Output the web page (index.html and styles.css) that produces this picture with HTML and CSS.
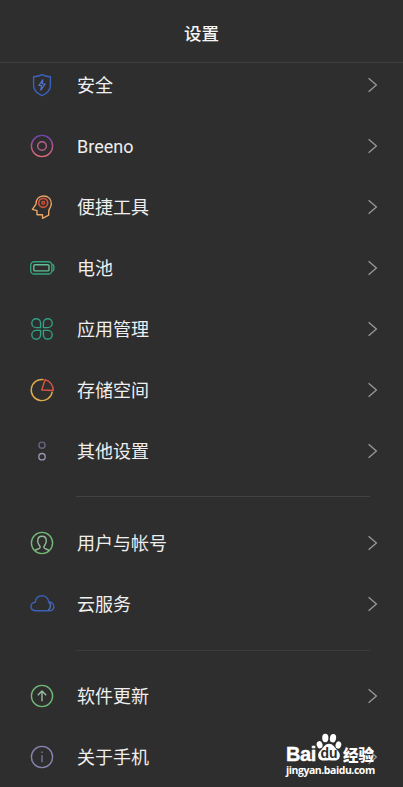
FILE: index.html
```html
<!DOCTYPE html>
<html lang="zh-CN">
<head>
<meta charset="utf-8">
<title>设置</title>
<link rel="stylesheet" href="styles.css">
</head>
<body>
<svg width="0" height="0" class="defs">
  <defs>
    <linearGradient id="ring" x1="0" y1="0" x2="0" y2="1"><stop offset="0" stop-color="#6f45b4"/><stop offset=".5" stop-color="#b65290"/><stop offset="1" stop-color="#e06d78"/></linearGradient>
    <symbol id="chevron" viewBox="0 0 12 18"><path d="M1.6 2.2 9.4 9 1.6 15.8" fill="none" stroke="#999" stroke-width="1.3"/></symbol>
  </defs>
</svg>
<header class="header"><h1>设置</h1></header>
<main class="list">
  <section>
    <div class="row"><svg class="icon" viewBox="0 0 28 28" stroke="#3b61bd"><path d="M14 3.6 C11.5 5.3 8.5 5.6 5.6 5.8 V14.5 C5.6 19.5 9.5 22.6 14 24.6 C18.5 22.6 22.4 19.5 22.4 14.5 V5.8 C19.5 5.6 16.5 5.3 14 3.6Z"/><path d="M14.8 8.8 10.8 14.5 H13.6 L12.8 19.2 17.2 13 H14.2Z" stroke="#5274d2" stroke-width="1.2"/></svg><span>安全</span><svg class="arrow"><use href="#chevron"/></svg></div>
    <div class="row"><svg class="icon" viewBox="0 0 28 28" stroke="url(#ring)"><circle cx="14" cy="14" r="10.6"/><circle cx="14" cy="14" r="4.3" stroke="#bb618f"/></svg><span>Breeno</span><svg class="arrow"><use href="#chevron"/></svg></div>
    <div class="row"><svg class="icon" viewBox="0 0 28 28" stroke="#e9a666"><path d="M14.5 25.3 V21.8 H9 V17.6 L4.4 16.3 8 11.2 C7.8 6.6 10.5 3 15.5 3 C20.5 3 23.3 6.3 23.3 10.7 C23.3 14.3 20.7 16 20.7 18.2 V22.2Z"/><circle cx="15.2" cy="9.8" r="4.5" stroke="#cc5339" stroke-width="1.7"/><circle cx="15.2" cy="9.8" r="1.4" stroke="#cc5339"/></svg><span>便捷工具</span><svg class="arrow"><use href="#chevron"/></svg></div>
    <div class="row"><svg class="icon" viewBox="0 0 28 28" stroke="#31a47d"><rect x="2.7" y="7.7" width="21.2" height="12.3" rx="3.6"/><path d="M24.5 10.2 Q26 11 26 13.8 T24.5 17.5"/><rect x="5.8" y="10.8" width="15.2" height="6.1" rx="1.2" stroke="#65bd94"/></svg><span>电池</span><svg class="arrow"><use href="#chevron"/></svg></div>
    <div class="row"><svg class="icon" viewBox="0 0 28 28" stroke="#31a083"><path d="M12.6 12.6 V8.2 A4.4 4.4 0 1 0 8.2 12.6Z"/><path d="M15.4 12.6 V8.2 A4.4 4.4 0 1 1 19.8 12.6Z"/><path d="M12.6 15.4 V19.8 A4.4 4.4 0 1 1 8.2 15.4Z"/><path d="M15.4 15.4 V19.8 A4.4 4.4 0 1 0 19.8 15.4Z"/></svg><span>应用管理</span><svg class="arrow"><use href="#chevron"/></svg></div>
    <div class="row"><svg class="icon" viewBox="0 0 28 28" stroke="#dfaa4b"><path d="M15.6 3.6 A10.6 10.6 0 1 0 24.3 15.7"/><path d="M17.1 3.7 A10.6 10.6 0 0 1 25.2 14.5 L13.7 14Z" stroke="#d65743"/></svg><span>存储空间</span><svg class="arrow"><use href="#chevron"/></svg></div>
    <div class="row"><svg class="icon" viewBox="0 0 28 28"><circle cx="14" cy="8.2" r="3.1" stroke="#69647f"/><circle cx="14" cy="19.7" r="3.2" stroke="#9292b3"/></svg><span>其他设置</span><svg class="arrow"><use href="#chevron"/></svg></div>
  </section>
  <section>
    <div class="row"><svg class="icon" viewBox="0 0 28 28" stroke="#71b875"><circle cx="14" cy="14" r="10.6"/><path d="M7 21.5 C8 20 12 20.3 12.2 18.2 C12.3 17 9.7 15.3 9.7 12 C9.7 9 11.5 7.3 14 7.3 S18.3 9 18.3 12 C18.3 15.3 15.7 17 15.8 18.2 C16 20.3 20 20 21 21.5" stroke="#94ba98"/></svg><span>用户与帐号</span><svg class="arrow"><use href="#chevron"/></svg></div>
    <div class="row"><svg class="icon" viewBox="0 0 28 28" stroke="#3b60b8"><path d="M8 20.8 C4.8 20.8 3 18.8 3 16.5 C3 14 5 12.3 7.2 12.3 C7.8 8.3 10.5 5.8 14 5.8 C18 5.8 20.4 8.8 20.8 12 C23.7 12 25.8 13.9 25.8 16.4 C25.8 19 23.8 20.8 21 20.8Z"/><path d="M20.8 12 C23.3 14.3 23 18 20 20.5" stroke="#506cb4"/></svg><span>云服务</span><svg class="arrow"><use href="#chevron"/></svg></div>
  </section>
  <section>
    <div class="row"><svg class="icon" viewBox="0 0 28 28" stroke="#70b776"><circle cx="14" cy="14" r="10.6"/><path d="M14 19.2 V9.2 M9.8 13.2 14 9 18.2 13.2" stroke="#9bbba3"/></svg><span>软件更新</span><svg class="arrow"><use href="#chevron"/></svg></div>
    <div class="row"><svg class="icon" viewBox="0 0 28 28" stroke="#8884b2"><circle cx="14" cy="14" r="10.6"/><path d="M14 12.2 V19.2 M14 8.6 V10.1" stroke="#77759a"/></svg><span>关于手机</span><svg class="arrow"><use href="#chevron"/></svg></div>
  </section>
</main>
<aside class="watermark">
  <div class="brand"><b class="bai">Bai</b>
    <span class="paw"><svg viewBox="0 0 26 28"><g fill="#fff"><ellipse cx="3.6" cy="11.8" rx="2.9" ry="3.7" transform="rotate(-15 3.6 11.8)"/><ellipse cx="9.3" cy="5" rx="3.1" ry="4.2"/><ellipse cx="17" cy="5.2" rx="3.1" ry="4.2" transform="rotate(10 17 5.2)"/><ellipse cx="22.4" cy="12" rx="2.8" ry="3.7" transform="rotate(15 22.4 12)"/><path d="M13 10.8 C17 10.8 18.2 14 20.3 16.2 C23 18.7 24.3 20.3 23.8 23.5 C23 28 18.5 27.8 13 27.3 C7.5 27.8 3 28 2.2 23.5 C1.7 20.3 3 18.7 5.7 16.2 C7.8 14 9 10.8 13 10.8Z"/></g></svg><b>du</b></span>
    <b class="exp">经验</b></div>
  <div class="url">jingyan.baidu.com</div>
</aside>
</body>
</html>
```
FILE: styles.css
```css
* { box-sizing: border-box; }
body {
  margin: 0;
  height: 787px;
  overflow: hidden;
  position: relative;
  background: #2e2e2e;
  color: #efefef;
  font-family: Roboto, "Noto Sans CJK SC", sans-serif;
}
.defs { position: absolute; }
.header {
  height: 63px;
  padding-top: 6px;
  display: flex;
  align-items: center;
  justify-content: center;
  border-bottom: 1px solid #3e3e3e;
}
h1 { margin: 0; font-size: 17.5px; font-weight: 500; line-height: 26px; color: #f5f5f5; }
.list { margin-top: -8px; }
.row {
  height: 61px;
  padding: 0 24px 0 28px;
  display: flex;
  align-items: center;
}
.row span { flex: 1; margin-left: 21px; font-size: 18px; line-height: 26px; }
.icon, .arrow { margin-bottom: 1px; }
.icon { width: 28px; height: 28px; fill: none; stroke-width: 1.4; stroke-linejoin: round; }
.arrow { width: 12px; height: 18px; }
section + section::before {
  content: "";
  display: block;
  height: 1px;
  margin: 14px 33px 16px 76px;
  background: #424242;
}
section:last-child::before { margin-top: 15px; margin-bottom: 15px; background: #3b3b3b; }
.watermark {
  position: absolute;
  left: 286px;
  top: 732px;
  width: 92px;
  color: #fff;
}
.brand { display: flex; align-items: flex-end; height: 30px; }
.bai { font: bold 20px/22px "Liberation Sans", sans-serif; width: 30px; margin-bottom: -3px; letter-spacing: -.4px; -webkit-text-stroke: .4px #fff; }
.paw { position: relative; width: 26px; height: 28px; margin-bottom: 1px; }
.paw svg { display: block; width: 26px; height: 28px; }
.paw b {
  position: absolute;
  left: 0;
  bottom: 0;
  width: 26px;
  text-align: center;
  color: #2e2e2e;
  font: bold 14px/15px "Liberation Sans", sans-serif;
}
.exp { font: 900 15.5px/20px "Noto Sans CJK SC", sans-serif; margin-left: 1px; white-space: nowrap; margin-bottom: -2px; }
.url { font: bold 10.5px/14px "Open Sans", "Noto Sans", sans-serif; letter-spacing: -.45px; white-space: nowrap; margin-top: 1px; }
```
